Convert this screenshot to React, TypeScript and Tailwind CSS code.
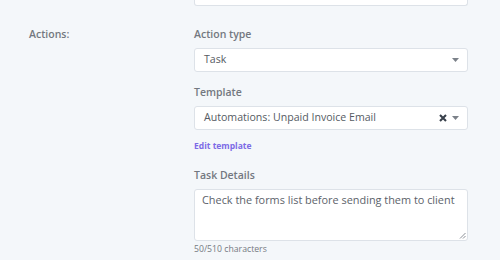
import React from "react";

function Caret() {
  return (
    <svg width="7" height="4" viewBox="0 0 7 4" className="shrink-0">
      <path d="M0 0 L7 0 L3.5 4 Z" fill="#7b8189" />
    </svg>
  );
}

function XIcon() {
  return (
    <svg width="8" height="8" viewBox="0 0 8 8" className="shrink-0">
      <path d="M1 1 L7 7 M7 1 L1 7" stroke="#38404b" strokeWidth="2.1" />
    </svg>
  );
}

export default function App() {
  return (
    <div
      className="w-[500px] h-[260px] overflow-hidden bg-[#f4f7fa] text-[#6d737b]"
      style={{ fontFamily: '"Open Sans", "Noto Sans", sans-serif' }}
    >
      <div className="flex">
        <div className="w-[194px] shrink-0" />
        <div className="w-[274px] h-[6px] bg-white border border-t-0 border-[#dde2e8] rounded-b-[3px]" />
      </div>
      <div className="flex pt-[21px]">
        <div className="w-[194px] shrink-0 pl-[29px] text-[10.5px] leading-[14px] font-semibold text-[#737880]">
          Actions:
        </div>
        <div className="w-[274px] flex flex-col">
          <div className="text-[10.5px] leading-[14px] font-semibold text-[#737880]">Action type</div>
          <div className="mt-[7px] h-[24px] bg-white border border-[#dde2e8] rounded-[3px] flex items-center pl-[9px] pr-[8px] text-[10.6px] text-[#555b63]">
            <span className="flex-1">Task</span>
            <Caret />
          </div>
          <div className="mt-[13px] text-[10.5px] leading-[14px] font-semibold text-[#737880]">Template</div>
          <div className="mt-[7px] h-[24px] bg-white border border-[#dde2e8] rounded-[3px] flex items-center pl-[9px] pr-[8px] text-[10.6px] text-[#555b63]">
            <span className="flex-1">Automations: Unpaid Invoice Email</span>
            <XIcon />
            <span className="w-[5px]" />
            <Caret />
          </div>
          <div className="mt-[10px] text-[8.5px] leading-[12px] font-bold text-[#7c6be6]">Edit template</div>
          <div className="mt-[16px] text-[10.5px] leading-[14px] font-semibold text-[#737880]">Task Details</div>
          <div className="relative mt-[7px] h-[52px] bg-white border border-[#dde2e8] rounded-[3px] px-[7px] pt-[3px] text-[10.9px] leading-[14px] text-[#5c626a]">
            Check the forms list before sending them to client
            <svg width="7" height="7" viewBox="0 0 7 7" className="absolute right-[1px] bottom-[1px]">
              <path d="M6.5 1 L1 6.5 M6.5 4 L4 6.5" stroke="#8a8f96" strokeWidth="1" />
            </svg>
          </div>
          <div className="mt-[2px] text-[8.7px] leading-[12px] text-[#747a82]">50/510 characters</div>
        </div>
      </div>
    </div>
  );
}
